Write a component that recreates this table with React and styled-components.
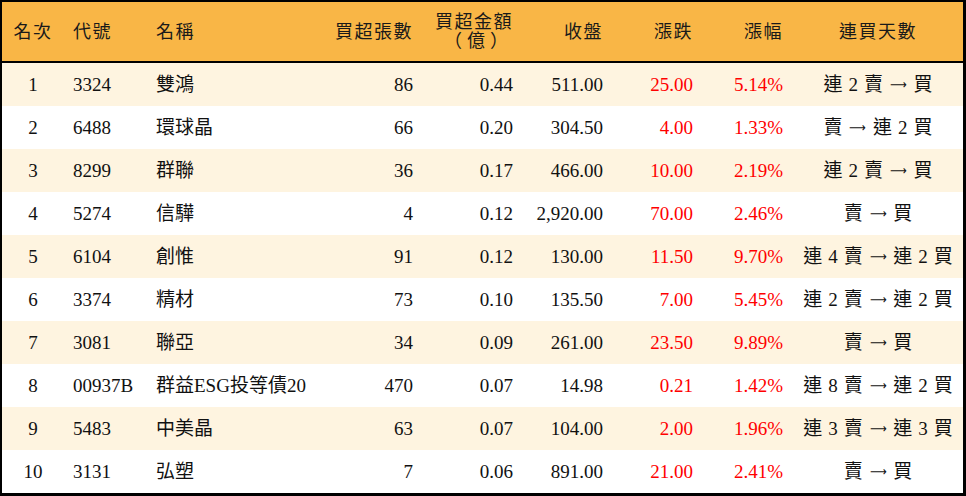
import React from 'react';
import styled, { createGlobalStyle } from 'styled-components';

const GlobalStyle = createGlobalStyle`
    html, body {
        margin: 0;
        padding: 0;
        background: #ffffff;
    }
    body {
        font-family: "Liberation Serif", "Noto Sans CJK TC", serif;
        color: #111111;
    }
`;

const COLUMNS = '62px 83px 183px 93px 100px 90px 90px 90px 170px';

const Board = styled.div`
    box-sizing: border-box;
    width: 966px;
    height: 496px;
    border-style: solid;
    border-color: #000000;
    border-width: 2px 3px 3px 2px;
    display: flex;
    flex-direction: column;
    background: #ffffff;
`;

const HeaderRow = styled.div`
    display: grid;
    grid-template-columns: ${COLUMNS};
    height: 59px;
    background-color: #f9b646;
    border-bottom: 2px solid #000000;
`;

const Row = styled.div`
    display: grid;
    grid-template-columns: ${COLUMNS};
    height: 43px;
    background-color: ${props => (props.$striped ? '#fef4e0' : '#ffffff')};
`;

const Cell = styled.div`
    display: flex;
    flex-direction: column;
    justify-content: center;
    align-items: ${props =>
        props.$align === 'right'
            ? 'flex-end'
            : props.$align === 'center'
            ? 'center'
            : 'flex-start'};
    text-align: ${props => props.$align || 'left'};
    padding: ${props =>
        props.$align === 'right'
            ? '0 10px 0 0'
            : props.$align === 'center'
            ? '0'
            : '0 0 0 9px'};
    font-size: 19px;
    line-height: 1;
    white-space: nowrap;
    color: ${props => (props.$up ? '#ff0000' : '#111111')};
`;

const HeadCell = styled(Cell)`
    font-size: 18px;
    letter-spacing: 1.5px;
    color: #1a1a1a;
`;

const HeadLine = styled.span`
    display: block;
    line-height: 19px;
    letter-spacing: ${props => (props.$wide ? '5px' : '1.5px')};
`;

const Streak = styled.span`
    display: inline-flex;
    align-items: center;
    gap: 6px;
`;

const Arrow = styled.span`
    font-family: "DejaVu Sans", sans-serif;
    font-size: 13px;
    transform: scaleX(0.9);
`;

const rows = [
    ['1', '3324', '雙鴻', '86', '0.44', '511.00', '25.00', '5.14%', '連 2 賣 → 買'],
    ['2', '6488', '環球晶', '66', '0.20', '304.50', '4.00', '1.33%', '賣 → 連 2 買'],
    ['3', '8299', '群聯', '36', '0.17', '466.00', '10.00', '2.19%', '連 2 賣 → 買'],
    ['4', '5274', '信驊', '4', '0.12', '2,920.00', '70.00', '2.46%', '賣 → 買'],
    ['5', '6104', '創惟', '91', '0.12', '130.00', '11.50', '9.70%', '連 4 賣 → 連 2 買'],
    ['6', '3374', '精材', '73', '0.10', '135.50', '7.00', '5.45%', '連 2 賣 → 連 2 買'],
    ['7', '3081', '聯亞', '34', '0.09', '261.00', '23.50', '9.89%', '賣 → 買'],
    ['8', '00937B', '群益ESG投等債20', '470', '0.07', '14.98', '0.21', '1.42%', '連 8 賣 → 連 2 買'],
    ['9', '5483', '中美晶', '63', '0.07', '104.00', '2.00', '1.96%', '連 3 賣 → 連 3 買'],
    ['10', '3131', '弘塑', '7', '0.06', '891.00', '21.00', '2.41%', '賣 → 買']
];

const aligns = ['center', 'left', 'left', 'right', 'right', 'right', 'right', 'right', 'center'];

function StreakText({ text }) {
    const parts = text.split(' ');
    return (
        <Streak>
            {parts.map((part, k) =>
                part === '→' ? <Arrow key={k}>⟶</Arrow> : <span key={k}>{part}</span>
            )}
        </Streak>
    );
}

export default function App() {
    return (
        <>
            <GlobalStyle />
            <Board>
                <HeaderRow>
                    <HeadCell $align="center">名次</HeadCell>
                    <HeadCell>代號</HeadCell>
                    <HeadCell>名稱</HeadCell>
                    <HeadCell $align="right">買超張數</HeadCell>
                    <HeadCell $align="right">
                        <HeadLine>買超金額</HeadLine>
                        <HeadLine $wide>（億）</HeadLine>
                    </HeadCell>
                    <HeadCell $align="right">收盤</HeadCell>
                    <HeadCell $align="right">漲跌</HeadCell>
                    <HeadCell $align="right">漲幅</HeadCell>
                    <HeadCell $align="center">連買天數</HeadCell>
                </HeaderRow>
                {rows.map((row, i) => (
                    <Row key={row[0]} $striped={i % 2 === 0}>
                        {row.map((value, j) => (
                            <Cell key={j} $align={aligns[j]} $up={j === 6 || j === 7}>
                                {j === 8 ? <StreakText text={value} /> : value}
                            </Cell>
                        ))}
                    </Row>
                ))}
            </Board>
        </>
    );
}
